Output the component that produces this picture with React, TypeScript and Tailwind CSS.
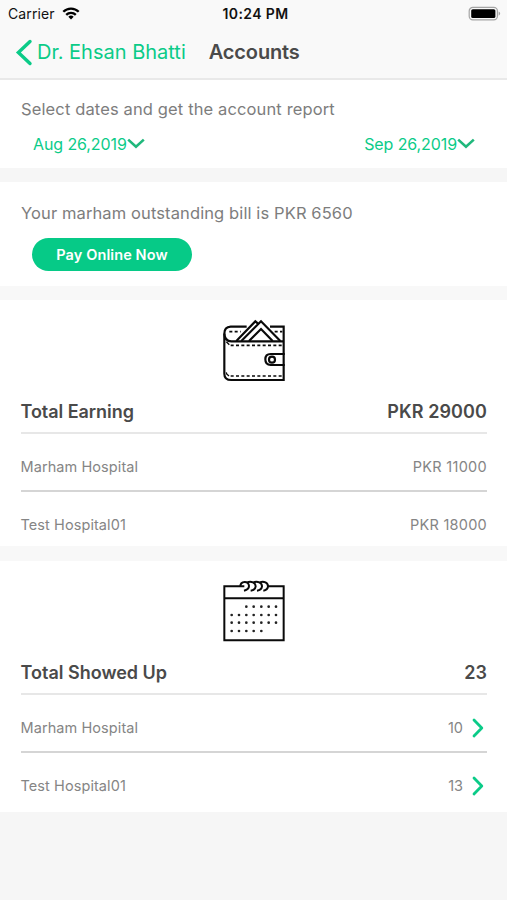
import type { ReactNode } from "react";

function WifiIcon() {
  return (
    <svg className="ml-[7px] h-[14px] w-[18px]" viewBox="0 0 18 14" fill="none" stroke="#000" strokeWidth="2.3">
      <path d="M1.3 4.8a10.8 10.8 0 0 1 15.4 0" />
      <path d="M4.2 7.9a6.8 6.8 0 0 1 9.6 0" />
      <path d="M9 12.5L6.3 9.8a3.9 3.9 0 0 1 5.4 0Z" fill="#000" stroke="none" />
    </svg>
  );
}

function BatteryIcon() {
  return (
    <svg className="h-[16px] w-[34px]" viewBox="0 0 34 16" fill="none">
      <rect x="2.2" y="1.4" width="28.2" height="12.4" rx="3.6" stroke="#a5a5a5" strokeWidth="1.2" />
      <rect x="4.2" y="3.2" width="24.2" height="8.8" rx="1.6" fill="#000" />
      <path d="M31.6 5.5q1.5.5 1.5 2.1t-1.5 2.1Z" fill="#a5a5a5" />
    </svg>
  );
}

function ChevronDown() {
  return (
    <svg className="h-[12px] w-[18px]" viewBox="0 0 18 12" fill="none" stroke="#20b87c" strokeWidth="2.6">
      <path d="M1.2 1.6L9 8.8L16.8 1.6" />
    </svg>
  );
}

function ChevronRight() {
  return (
    <svg className="ml-[9px] mr-[3px] h-[20px] w-[12px]" viewBox="0 0 12 20" fill="none" stroke="#0bcb88" strokeWidth="2.8" strokeLinecap="round" strokeLinejoin="round">
      <path d="M2 2L9.8 10L2 18" />
    </svg>
  );
}

function WalletIcon() {
  return (
    <svg className="ml-[210px] block h-[80px] w-[90px]" viewBox="0 0 270 240" fill="none" stroke="#0a0a0a" strokeWidth="6.5">
      <path d="M110 50H62Q43 51 43 71V191Q43 210 64 210H221V162M221 135V50H180" />
      <path d="M43 71Q44 94 64 94H221" />
      <path d="M79 93L136 34L144 41M94 93L153 34L211 93M117 93L153 57L188 93" />
      <path d="M58 65H92M194 65H217M62 106H217M62 198H217" strokeWidth="5" strokeDasharray="9 7" />
      <path d="M49 95L58 104M49 187L50 192L57 198" strokeWidth="4" />
      <path d="M221 132H182Q166 132 166 148Q166 165 182 165H221Z" />
      <circle cx="186" cy="149" r="9" />
    </svg>
  );
}

const calendarDots: [number, number[]][] = [
  [110, [109, 131, 154, 176, 198]],
  [135, [65, 87, 109, 131, 154, 176, 198]],
  [158, [65, 87, 109, 131, 154, 176, 198]],
  [183, [65, 87, 109, 131, 154]],
];

function CalendarIcon() {
  return (
    <svg className="ml-[210px] block h-[80px] w-[90px]" viewBox="0 0 270 240" fill="none" stroke="#0a0a0a" strokeWidth="6">
      <path d="M103 49H43V211H221V49H174M43 85H221" />
      <path d="M91 50C91 32 117 32 117 48Q117 58 102 62M111 37C124 32 137 38 137 49Q136 60 122 62M130 37C143 32 156 38 156 49Q155 60 141 62M149 37C162 32 174 38 174 49Q173 60 160 62" />
      <g fill="#222" stroke="none">
        {calendarDots.map(([y, xs]) => xs.map((x) => <circle key={`${x}-${y}`} cx={x} cy={y} r="4" />))}
      </g>
    </svg>
  );
}

function Row({ name, children }: { name: string; children: ReactNode }) {
  return (
    <div className="flex h-[56px] items-center justify-between text-[14.5px] text-[#858585]">
      <span className="tracking-[0.08px]">{name}</span>
      <span className="flex items-center">{children}</span>
    </div>
  );
}

export default function App() {
  return (
    <div className="flex h-[900px] w-[507px] flex-col bg-[#f6f6f6] font-['Inter',sans-serif]">
      <header className="h-[80px] border-b-2 border-[#e9e9e9] bg-[#f9f9f9]">
        <div className="grid h-[27px] grid-cols-[1fr_auto_1fr] items-center pl-[8px] pr-[6px] text-[#111]">
          <div className="flex items-center text-[14px] tracking-[0.1px]">
            Carrier
            <WifiIcon />
          </div>
          <div className="pl-[2px] text-[14px] font-semibold tracking-[0.4px]">10:24 PM</div>
          <div className="flex justify-end">
            <BatteryIcon />
          </div>
        </div>
        <div className="flex h-[50px] items-center text-[20px]">
          <svg className="ml-[15px] h-[28px] w-[18px]" viewBox="0 0 18 28" fill="none" stroke="#0bcb88" strokeWidth="3.4" strokeLinecap="round">
            <path d="M15 3.5L3.4 14.5L15 25.5" />
          </svg>
          <span className="ml-[4px] text-[#0bcb88]">Dr. Ehsan Bhatti</span>
          <span className="ml-[23px] font-semibold tracking-[-0.15px] text-[#4a4a4a]">Accounts</span>
        </div>
      </header>

      <section className="h-[88px] bg-white pt-[17px]">
        <p className="pl-[21px] text-[16.5px] leading-[24px] tracking-[0.13px] text-[#7d7d7d]">Select dates and get the account report</p>
        <div className="mt-[11px] flex h-[24px] items-center justify-between pl-[33px] pr-[32px] text-[16px] tracking-[-0.1px] text-[#0bcb88]">
          <span className="flex items-center">Aug 26,2019<ChevronDown /></span>
          <span className="flex items-center">Sep 26,2019<ChevronDown /></span>
        </div>
      </section>

      <section className="mt-[14px] h-[104px] bg-white pt-[19px]">
        <p className="pl-[21px] text-[16.5px] leading-[24px] tracking-[0.11px] text-[#7d7d7d]">Your marham outstanding bill is PKR 6560</p>
        <button className="ml-[32px] mt-[13px] flex h-[33px] w-[160px] items-center justify-center rounded-full bg-[#06ca87] text-[14.5px] font-semibold tracking-[0.1px] text-white">
          Pay Online Now
        </button>
      </section>

      <div className="h-[14px] bg-[#f8f8f8]" />

      <section className="h-[246px] bg-white pt-[10px]">
        <WalletIcon />
        <div className="pl-[20.5px] pr-[20px]">
          <div className="flex h-[44px] items-center justify-between border-b-2 border-[#e7e7e7] text-[18px] font-semibold text-[#4a4a4a]">
            <span className="tracking-[-0.05px]">Total Earning</span>
            <span className="tracking-[0.1px]">PKR 29000</span>
          </div>
          <div className="h-[58px] border-b-2 border-[#d5d5d5] pt-[5px]">
            <Row name="Marham Hospital"><span className="tracking-[0.3px]">PKR 11000</span></Row>
          </div>
          <div className="pt-[5px]">
            <Row name="Test Hospital01"><span className="tracking-[0.25px]">PKR 18000</span></Row>
          </div>
        </div>
      </section>

      <div className="h-[15px] bg-[#f8f8f8]" />

      <section className="h-[251px] bg-white pt-[9px]">
        <CalendarIcon />
        <div className="pl-[20.5px] pr-[20px]">
          <div className="flex h-[45px] items-center justify-between border-b-2 border-[#e7e7e7] pt-[1px] text-[18px] font-semibold text-[#4a4a4a]">
            <span>Total Showed Up</span>
            <span>23</span>
          </div>
          <div className="h-[58px] border-b-2 border-[#d5d5d5] pt-[5px]">
            <Row name="Marham Hospital">10<ChevronRight /></Row>
          </div>
          <div className="pt-[5px]">
            <Row name="Test Hospital01">13<ChevronRight /></Row>
          </div>
        </div>
      </section>
    </div>
  );
}
